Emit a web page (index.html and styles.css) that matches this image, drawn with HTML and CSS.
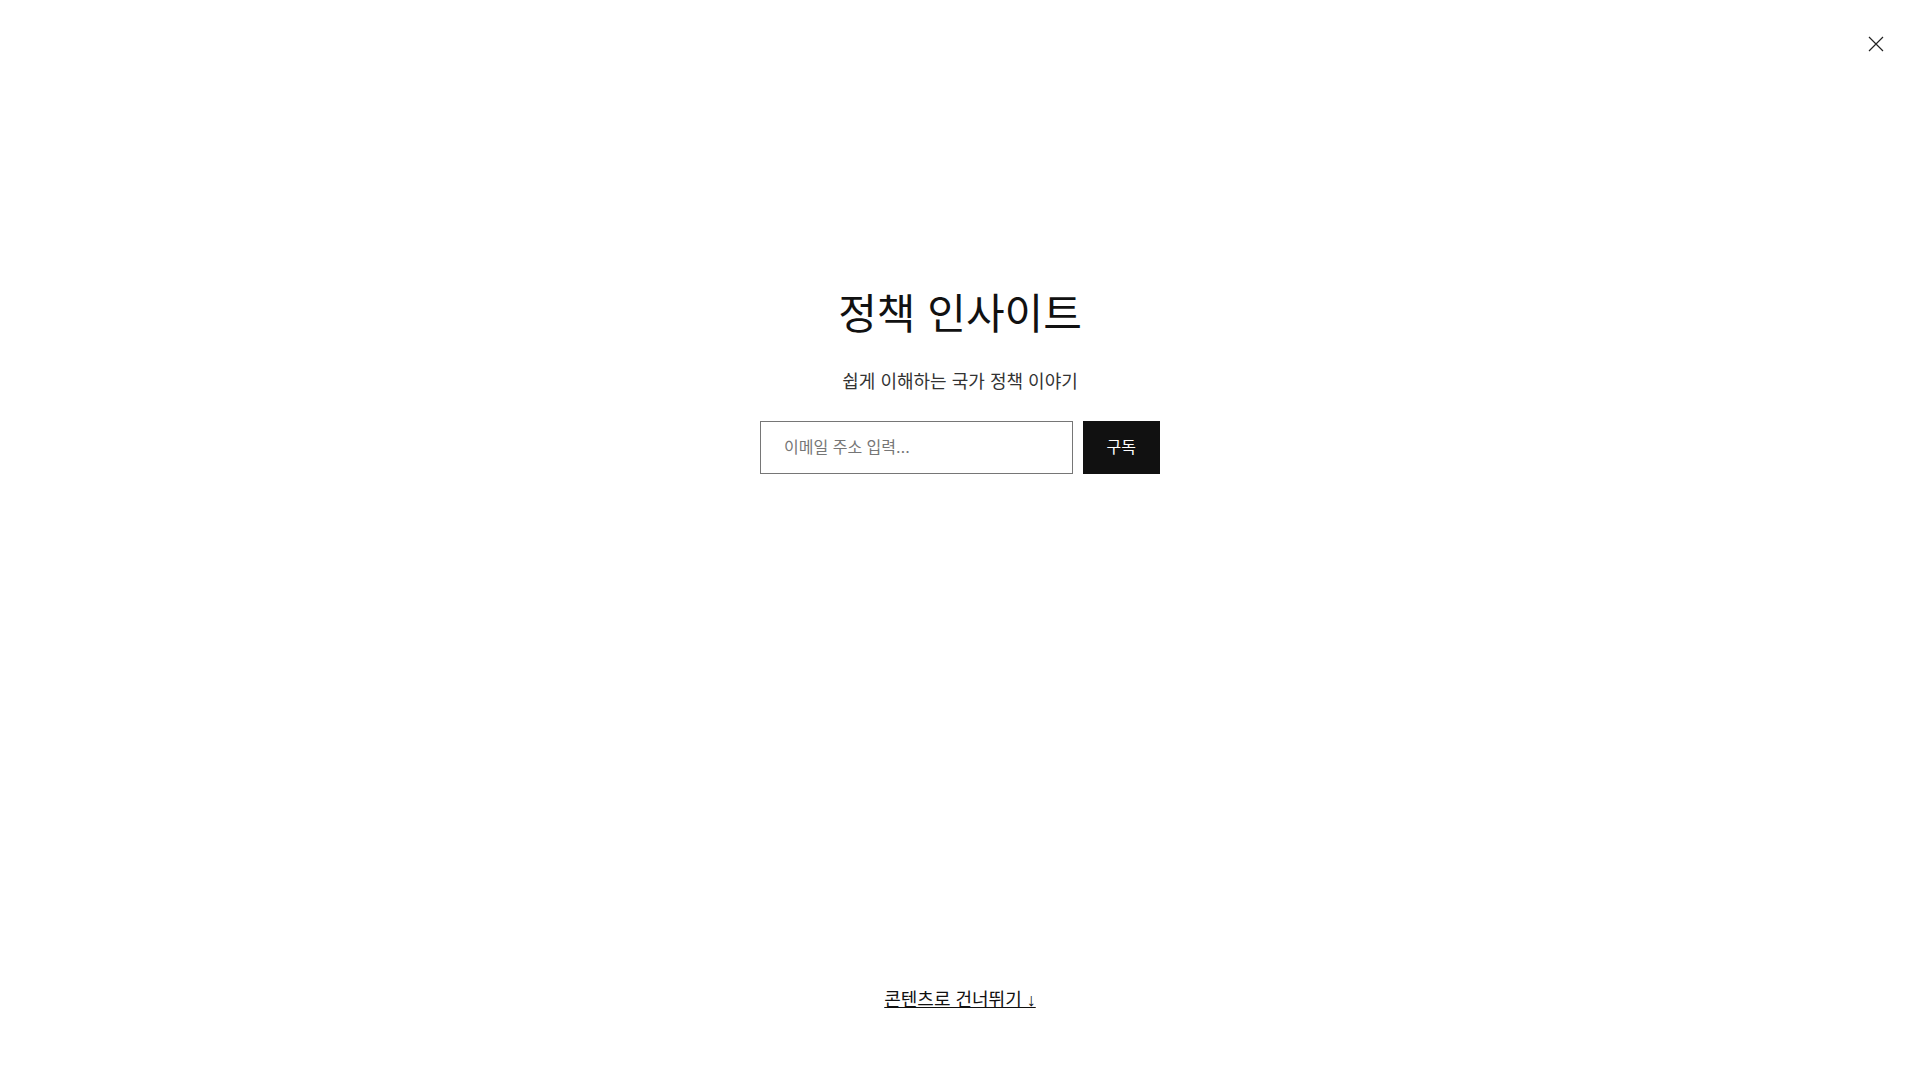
FILE: index.html
```
<!DOCTYPE html>
<html lang="ko">
  <head>
    <meta charset="UTF-8">
    <meta name="viewport" content="width=device-width, initial-scale=1">

    <title>정책 인사이트</title>

    <link rel="stylesheet" href="styles.css">
  </head>

  <body>
    <div class="overlay">
      <header class="topbar">
        <button class="close" type="button" aria-label="닫기">
          <svg viewBox="0 0 24 24" width="24" height="24" aria-hidden="true">
            <path d="M5 5L19 19M19 5L5 19" fill="none" stroke="currentColor" stroke-width="1.2"/>
          </svg>
        </button>
      </header>

      <main class="content">
        <h1 class="title">정책 인사이트</h1>
        <p class="tagline">쉽게 이해하는 국가 정책 이야기</p>

        <form class="subscribe">
          <input class="email" type="email" placeholder="이메일 주소 입력…" aria-label="이메일 주소 입력">
          <button class="submit" type="submit">구독</button>
        </form>
      </main>

      <footer class="footer">
        <a class="skip" href="#content">콘텐츠로 건너뛰기 ↓</a>
      </footer>
    </div>
  </body>
</html>
```

FILE: styles.css
```
* {
  box-sizing: border-box;
}

body {
  margin: 0;
  background-color: #fff;
  color: #111;
  font-family: Inter, "Noto Sans CJK KR", sans-serif;
  font-size: 18px;
  line-height: 27px;
}

.overlay {
  display: flex;
  flex-direction: column;
  min-height: 100vh;
}

.topbar {
  display: flex;
  justify-content: flex-end;
  padding: 32px 32px 0;
}

.close {
  display: flex;
  padding: 0;
  border: 0;
  background: none;
  color: #222;
  cursor: pointer;
}

.content {
  flex: 1;
  display: flex;
  flex-direction: column;
  align-items: center;
  padding-top: 230px;
}

.title {
  margin: 0 0 26px;
  font-size: 42px;
  font-weight: 400;
  line-height: 56px;
}

.tagline {
  margin: 0 0 26px;
  color: #333;
}

.subscribe {
  display: flex;
  gap: 10px;
  width: 100%;
  max-width: 400px;
}

.email {
  flex: 1;
  min-width: 0;
  padding: 12px 23px;
  border: 1px solid #767676;
  border-radius: 0;
  font: inherit;
  font-size: 16px;
}

.email::placeholder {
  color: #767676;
}

.submit {
  padding: 12px 24px;
  border: 0;
  background-color: #111;
  color: #fff;
  font: inherit;
  font-size: 16px;
  cursor: pointer;
}

.footer {
  padding-bottom: 66px;
  text-align: center;
}

.skip {
  color: #111;
  font-family: "Liberation Sans", "Noto Sans CJK KR", sans-serif;
}
```
